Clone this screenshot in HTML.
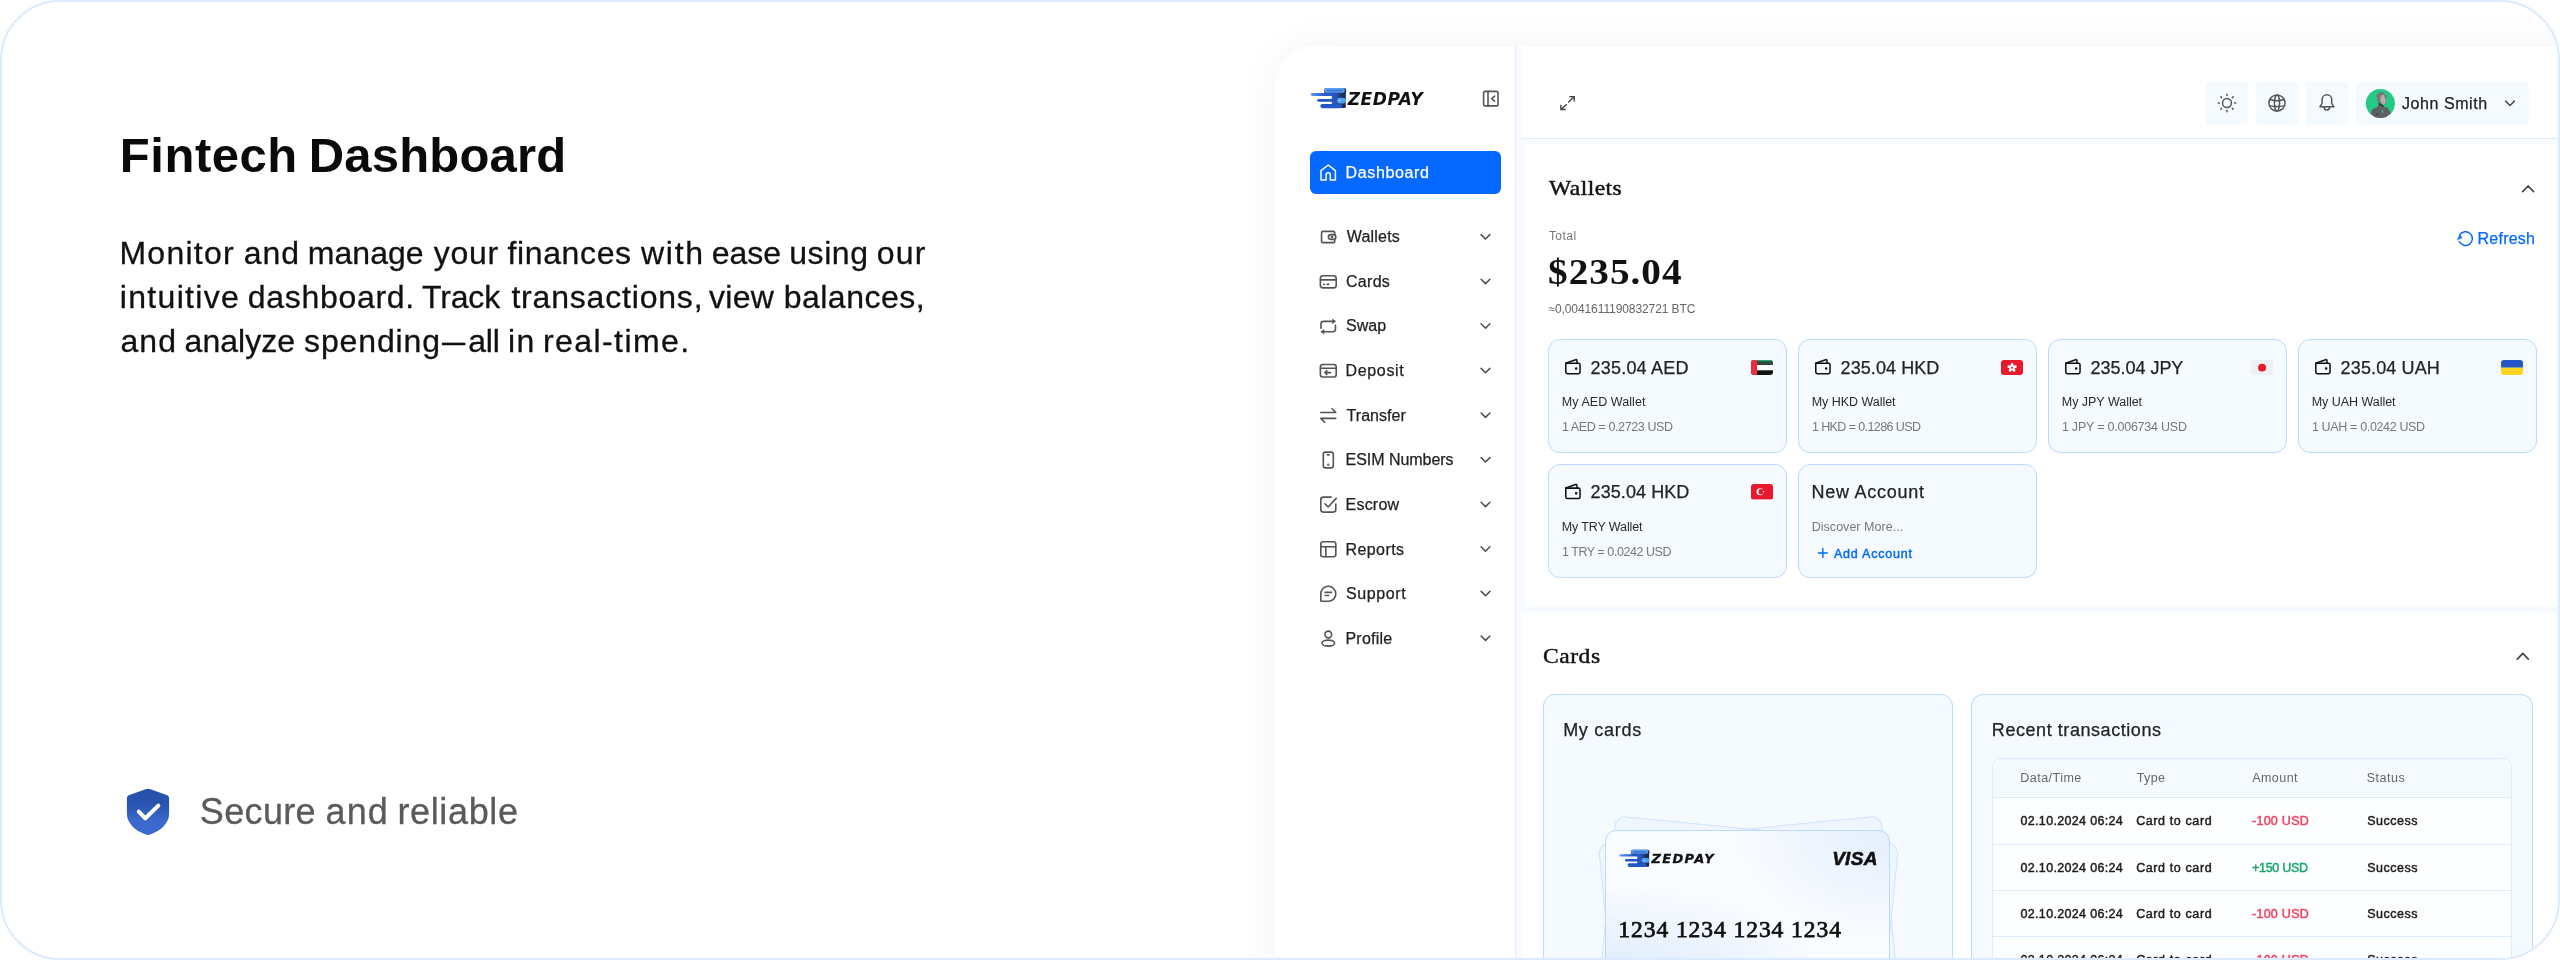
<!DOCTYPE html>
<html lang="en"><head><meta charset="utf-8"><title>Fintech Dashboard</title>
<style>
html,body{margin:0;padding:0;background:#fff;}
body{width:2560px;height:960px;overflow:hidden;position:relative;font-family:"Liberation Sans",sans-serif;}
#frame{position:absolute;left:0;top:0;width:2556px;height:956px;border:2px solid #dbeafe;border-radius:60px;background:#fff;overflow:hidden;}
#in{position:absolute;left:-2px;top:-2px;width:2560px;height:960px;will-change:transform;}
h1,h2,p{margin:0;padding:0;font:inherit;}
.t{position:absolute;white-space:pre;display:block;}
.b{position:absolute;box-sizing:border-box;}
svg{position:absolute;overflow:visible;}
.ic{fill:none;stroke:#555;stroke-width:1.5;stroke-linecap:round;stroke-linejoin:round;}
#dash{left:1274.5px;top:45.5px;width:1320px;height:960px;background:#fff;border-top-left-radius:40px;box-shadow:0 0 40px rgba(0,0,0,.05);overflow:hidden;}
#dashin{position:absolute;left:-1274.5px;top:-45.5px;width:2560px;height:960px;}
.main{left:1516px;top:45px;width:1060px;height:930px;background:#f7fbff;}
.sbline{left:1515px;top:45px;width:1px;height:930px;background:#e3effd;}
.hdr{left:1516px;top:45px;width:1060px;height:94px;background:#fff;border-bottom:1px solid #dcebfd;}
.panel{background:#fff;}
.nb{left:1310.2px;top:150.9px;width:191.3px;height:43px;border-radius:6px;background:#0569ff;}
.hb{height:42.8px;border-radius:4px;background:#f5faff;}
.wc{width:238.6px;height:114.4px;border-radius:12px;border:1px solid #bcd9ff;background:#f5faff;}
.box{border-radius:12px;border:1px solid #bcd9ff;background:#f5faff;}
.flag{width:21.8px;height:15.4px;border-radius:3px;overflow:hidden;}

</style></head>
<body>
<div id="frame"><div id="in">
<svg class="" style="left:126px;top:788px;" width="46" height="49" viewBox="0 0 46 49"><g transform="translate(0.900 0.750) scale(1.00000 1.00000) translate(-0.0 -0.0)"><defs><linearGradient id="sg" x1="0" y1="0" x2="0" y2="1"><stop offset="0" stop-color="#2652ac"/><stop offset="0.3" stop-color="#2753ae"/><stop offset="0.7" stop-color="#3a69cb"/><stop offset="1" stop-color="#3c6cd0"/></linearGradient></defs>
<path d="M21.1 0 C22 0 22.8 0.3 23.6 0.6 L39.7 6.3 C41.3 6.9 42.2 8 42.2 9.6 L42.2 25 C42.2 35 33 42.5 23.3 45.8 C21.9 46.4 20.3 46.4 18.9 45.8 C9.2 42.5 0 35 0 25 L0 9.6 C0 8 0.9 6.9 2.5 6.3 L18.6 0.6 C19.4 0.3 20.2 0 21.1 0 Z" fill="url(#sg)" stroke="none"/>
<path d="M11.9 22.9 L18.4 29.6 L31.4 16.9" fill="none" stroke="#fff" stroke-width="4.1" stroke-linecap="round" stroke-linejoin="round"/></g></svg>
<div class="b" id="dash"><div id="dashin">
<div class="b main" style="left:1516px;top:45px;"></div>
<div class="b hdr" style="left:1521px;top:45px;"></div>
<div class="b sbline" style="left:1515px;top:45px;"></div>
<div class="b panel" style="left:1526.4px;top:144.1px;width:1040px;height:462.1px;"></div>
<div class="b panel" style="left:1520.7px;top:611.9px;width:1034.3px;height:360px;"></div>
<svg class="" style="left:1310px;top:87px;" width="39" height="24" viewBox="0 0 39 24"><g transform="translate(0.500 0.500) scale(1.00000 1.00000) translate(-0.0 -0.0)">
<defs><linearGradient id="lg1a" x1="0" y1="0" x2="1" y2="0"><stop offset="0" stop-color="#2d62cf"/><stop offset="0.35" stop-color="#2450b0"/><stop offset="0.75" stop-color="#1d2d58"/><stop offset="1" stop-color="#1a2748"/></linearGradient>
<linearGradient id="lg1b" x1="0" y1="0" x2="1" y2="0"><stop offset="0" stop-color="#5a9df5"/><stop offset="0.5" stop-color="#2a5fcc"/><stop offset="1" stop-color="#2353c0"/></linearGradient></defs>
<rect x="13.7" y="0.5" width="22" height="6" rx="2.3" fill="#1f2e55"/>
<rect x="13.7" y="0.5" width="20.6" height="4.7" rx="2.3" fill="#5b9ff3"/>
<rect x="16" y="1.9" width="16.5" height="2" rx="1" fill="#3f78dc"/>
<path d="M21.2 5.4 H35.3 V19 A1.6 1.6 0 0 1 33.7 20.6 H21.2 Z" fill="url(#lg1a)"/>
<rect x="0.3" y="5.6" width="25" height="2.9" rx="1.45" fill="url(#lg1b)"/>
<rect x="6.8" y="11.4" width="17" height="2.8" rx="1.4" fill="#2457c6"/>
<rect x="9.8" y="16.4" width="22" height="4.3" rx="2.1" fill="#2457c6"/>
<rect x="26.4" y="10.2" width="9.2" height="5.7" rx="2.8" fill="#4e9cf7"/>
<circle cx="29.4" cy="13.1" r="0.75" fill="#e8f2ff"/>
</g></svg>
<svg class="ic" style="left:1482px;top:90px;stroke-width:1.6" width="20" height="20" viewBox="0 0 20 20"><g transform="translate(0.000 0.000) scale(1.00000 1.00000) translate(-1482.0 -90.0)"><rect x="1483.6" y="91.4" width="14.4" height="14.5" rx="1.7"/><path d="M1488 91.4 V105.9"/><path d="M1494.6 96.1 L1491.7 98.6 L1494.6 101.1"/></g></svg>
<div class="b nb" style="left:1310.2px;top:150.9px;"></div>
<svg class="ic" style="left:1319px;top:163px;stroke:#fff;stroke-width:1.5" width="21" height="21" viewBox="0 0 21 21"><g transform="translate(0.000 0.000) scale(1.00000 1.00000) translate(-1319.0 -163.0)"><path d="M1321 170.6 L1328.2 165 L1335.4 170.6 V180.1 H1330.3 V174.9 A2.1 2.1 0 0 0 1326.1 174.9 V180.1 H1321 Z"/></g></svg>
<svg class="ic" style="left:1318px;top:227px;stroke-width:1.95;" width="23" height="22" viewBox="0 0 23 22"><g transform="translate(0.300 0.000) scale(0.83333 0.83333) translate(-0.0 -0.0)"><rect x="3.9" y="5.2" width="15.8" height="13.6" rx="1.8"/><rect x="12.1" y="9.2" width="8.9" height="5.6" rx="2.8" fill="#fff"/><circle cx="16.4" cy="12" r="0.7"/></g></svg>
<svg class="ic" style="left:1480px;top:233px;stroke:#4d4d4d;stroke-width:1.5" width="13" height="10" viewBox="0 0 13 10"><g transform="translate(0.300 0.700) scale(1.00000 1.00000) translate(-0.0 -0.0)"><path d="M0.8 0.9 L5.2 5.3 L9.6 0.9"/></g></svg>
<svg class="ic" style="left:1318px;top:271px;stroke-width:1.95;" width="23" height="23" viewBox="0 0 23 23"><g transform="translate(0.300 0.600) scale(0.83333 0.83333) translate(-0.0 -0.0)"><rect x="2.5" y="5" width="19" height="14.5" rx="3.2"/><path d="M2.5 10 H21.5"/><path d="M6.5 15.3 H7.2 M10.5 15.3 H12.5"/></g></svg>
<svg class="ic" style="left:1480px;top:278px;stroke:#4d4d4d;stroke-width:1.5" width="13" height="9" viewBox="0 0 13 9"><g transform="translate(0.300 0.300) scale(1.00000 1.00000) translate(-0.0 -0.0)"><path d="M0.8 0.9 L5.2 5.3 L9.6 0.9"/></g></svg>
<svg class="ic" style="left:1318px;top:316px;stroke-width:1.95;" width="23" height="23" viewBox="0 0 23 23"><g transform="translate(0.300 0.200) scale(0.83333 0.83333) translate(-0.0 -0.0)"><path d="M3.2 14.4 V9.4 A3.2 3.2 0 0 1 6.4 6.2 H18.5"/><path d="M17.4 3.8 L20.8 6.2 L17.4 8.6 Z" fill="#555" stroke-width="0.8"/><path d="M20.6 10.8 V15.5 A3.2 3.2 0 0 1 17.4 18.7 H5.5"/><path d="M6.4 16.3 L3 18.7 L6.4 21.1 Z" fill="#555" stroke-width="0.8"/></g></svg>
<svg class="ic" style="left:1480px;top:322px;stroke:#4d4d4d;stroke-width:1.5" width="13" height="10" viewBox="0 0 13 10"><g transform="translate(0.300 0.900) scale(1.00000 1.00000) translate(-0.0 -0.0)"><path d="M0.8 0.9 L5.2 5.3 L9.6 0.9"/></g></svg>
<svg class="ic" style="left:1318px;top:360px;stroke-width:1.95;" width="23" height="23" viewBox="0 0 23 23"><g transform="translate(0.300 0.800) scale(0.83333 0.83333) translate(-0.0 -0.0)"><rect x="2.5" y="4.5" width="19" height="15" rx="3"/><path d="M2.5 9 H21.5"/><path d="M14.5 14.2 H8 M10.3 11.9 L8 14.2 L10.3 16.5"/></g></svg>
<svg class="ic" style="left:1480px;top:367px;stroke:#4d4d4d;stroke-width:1.5" width="13" height="10" viewBox="0 0 13 10"><g transform="translate(0.300 0.500) scale(1.00000 1.00000) translate(-0.0 -0.0)"><path d="M0.8 0.9 L5.2 5.3 L9.6 0.9"/></g></svg>
<svg class="ic" style="left:1318px;top:405px;stroke-width:1.95;" width="23" height="23" viewBox="0 0 23 23"><g transform="translate(0.300 0.400) scale(0.83333 0.83333) translate(-0.0 -0.0)"><path d="M3 8.5 H21 L16.5 4"/><path d="M21 15.5 H3 L7.5 20"/></g></svg>
<svg class="ic" style="left:1480px;top:412px;stroke:#4d4d4d;stroke-width:1.5" width="13" height="9" viewBox="0 0 13 9"><g transform="translate(0.300 0.100) scale(1.00000 1.00000) translate(-0.0 -0.0)"><path d="M0.8 0.9 L5.2 5.3 L9.6 0.9"/></g></svg>
<svg class="ic" style="left:1318px;top:450px;stroke-width:1.95;" width="23" height="22" viewBox="0 0 23 22"><g transform="translate(0.300 0.000) scale(0.83333 0.83333) translate(-0.0 -0.0)"><rect x="6" y="2.5" width="12" height="19" rx="2.6"/><path d="M11 5.8 H13"/><circle cx="12" cy="17.6" r="0.5"/></g></svg>
<svg class="ic" style="left:1480px;top:456px;stroke:#4d4d4d;stroke-width:1.5" width="13" height="10" viewBox="0 0 13 10"><g transform="translate(0.300 0.700) scale(1.00000 1.00000) translate(-0.0 -0.0)"><path d="M0.8 0.9 L5.2 5.3 L9.6 0.9"/></g></svg>
<svg class="ic" style="left:1318px;top:494px;stroke-width:1.95;" width="23" height="23" viewBox="0 0 23 23"><g transform="translate(0.300 0.600) scale(0.83333 0.83333) translate(-0.0 -0.0)"><path d="M21 11.5 V18 A3 3 0 0 1 18 21 H6 A3 3 0 0 1 3 18 V6 A3 3 0 0 1 6 3 H15.5"/><path d="M8 11 L11.8 14.8 L21.5 4.5"/></g></svg>
<svg class="ic" style="left:1480px;top:501px;stroke:#4d4d4d;stroke-width:1.5" width="13" height="9" viewBox="0 0 13 9"><g transform="translate(0.300 0.300) scale(1.00000 1.00000) translate(-0.0 -0.0)"><path d="M0.8 0.9 L5.2 5.3 L9.6 0.9"/></g></svg>
<svg class="ic" style="left:1318px;top:539px;stroke-width:1.95;" width="23" height="23" viewBox="0 0 23 23"><g transform="translate(0.300 0.200) scale(0.83333 0.83333) translate(-0.0 -0.0)"><rect x="3" y="3" width="18" height="18" rx="2.6"/><path d="M3 9 H21 M9 9 V21"/></g></svg>
<svg class="ic" style="left:1480px;top:545px;stroke:#4d4d4d;stroke-width:1.5" width="13" height="10" viewBox="0 0 13 10"><g transform="translate(0.300 0.900) scale(1.00000 1.00000) translate(-0.0 -0.0)"><path d="M0.8 0.9 L5.2 5.3 L9.6 0.9"/></g></svg>
<svg class="ic" style="left:1318px;top:583px;stroke-width:1.95;" width="23" height="23" viewBox="0 0 23 23"><g transform="translate(0.300 0.800) scale(0.83333 0.83333) translate(-0.0 -0.0)"><path d="M12 3 A9 9 0 0 1 12 21 H3.6 A0.6 0.6 0 0 1 3 20.4 V12 A9 9 0 0 1 12 3 Z"/><path d="M8.2 10.3 H15.8 M8.2 14 H12.5"/></g></svg>
<svg class="ic" style="left:1480px;top:590px;stroke:#4d4d4d;stroke-width:1.5" width="13" height="10" viewBox="0 0 13 10"><g transform="translate(0.300 0.500) scale(1.00000 1.00000) translate(-0.0 -0.0)"><path d="M0.8 0.9 L5.2 5.3 L9.6 0.9"/></g></svg>
<svg class="ic" style="left:1318px;top:628px;stroke-width:1.95;" width="23" height="23" viewBox="0 0 23 23"><g transform="translate(0.300 0.400) scale(0.83333 0.83333) translate(-0.0 -0.0)"><circle cx="12" cy="7.3" r="4"/><ellipse cx="12" cy="17.6" rx="7.6" ry="3.6"/></g></svg>
<svg class="ic" style="left:1480px;top:635px;stroke:#4d4d4d;stroke-width:1.5" width="13" height="9" viewBox="0 0 13 9"><g transform="translate(0.300 0.100) scale(1.00000 1.00000) translate(-0.0 -0.0)"><path d="M0.8 0.9 L5.2 5.3 L9.6 0.9"/></g></svg>
<svg class="ic" style="left:1559px;top:95px;stroke-width:1.4;stroke:#444;stroke-linecap:butt;stroke-linejoin:miter" width="19" height="18" viewBox="0 0 19 18"><g transform="translate(0.000 0.000) scale(1.00000 1.00000) translate(-1559.0 -95.0)"><path d="M1568.2 102.4 L1574.2 96.6 M1569.3 96.6 H1574.2 V101.6"/><path d="M1566.8 104.2 L1560.9 109.5 M1560.9 104.8 V109.5 H1565.8"/></g></svg>
<div class="b hb" style="left:2205.9px;top:81.9px;width:42.6px;"></div>
<div class="b hb" style="left:2255.9px;top:81.9px;width:42.7px;"></div>
<div class="b hb" style="left:2305.9px;top:81.9px;width:42.7px;"></div>
<div class="b hb" style="left:2355.9px;top:81.9px;width:173.4px;"></div>
<svg class="ic" style="left:2216px;top:92px;stroke-width:1.95;stroke-width:1.7;" width="24" height="24" viewBox="0 0 24 24"><g transform="translate(0.500 0.500) scale(0.87500 0.87500) translate(-0.0 -0.0)"><circle cx="12" cy="12" r="5.1"/><path d="M20.70 12.00 L22.00 12.00"/><path d="M18.15 18.15 L19.07 19.07"/><path d="M12.00 20.70 L12.00 22.00"/><path d="M5.85 18.15 L4.93 19.07"/><path d="M3.30 12.00 L2.00 12.00"/><path d="M5.85 5.85 L4.93 4.93"/><path d="M12.00 3.30 L12.00 2.00"/><path d="M18.15 5.85 L19.07 4.93"/></g></svg>
<svg class="ic" style="left:2266px;top:92px;stroke-width:1.95;stroke-width:1.7;" width="24" height="24" viewBox="0 0 24 24"><g transform="translate(0.500 0.500) scale(0.87500 0.87500) translate(-0.0 -0.0)"><circle cx="12" cy="12" r="9.2"/><ellipse cx="12" cy="12" rx="2.9" ry="9.2"/><path d="M3.9 7.7 Q12 11.1 20.1 7.7 M3.4 15 Q12 17 20.6 15"/></g></svg>
<svg class="ic" style="left:2316px;top:92px;stroke-width:1.95;stroke-width:1.7;" width="24" height="24" viewBox="0 0 24 24"><g transform="translate(0.400 0.400) scale(0.87500 0.87500) translate(-0.0 -0.0)"><path d="M6.5 8.3 A5.5 5.5 0 0 1 17.5 8.3 V12.6 L20 16.5 H4 L6.5 12.6 Z"/><path d="M9 16.9 A3 3.2 0 0 0 15 16.9"/></g></svg>
<svg class="" style="left:2365px;top:88px;" width="32" height="32" viewBox="0 0 32 32"><g transform="translate(0.900 0.900) scale(1.00000 1.00000) translate(-0.0 -0.0)"><defs><clipPath id="av"><circle cx="14.5" cy="14.5" r="14.5"/></clipPath></defs>
<circle cx="14.5" cy="14.5" r="14.5" fill="#24c984"/>
<g clip-path="url(#av)"><polygon points="4.73,24.52 6.60,20.35 11.60,17.85 12.85,14.52 15.77,16.60 18.06,18.06 21.60,18.68 24.10,22.85 25.14,24.31 19.10,29.5 14.10,29.5 9.10,29" fill="#5f5f61"/>
<polygon points="12.02,4.52 15.77,3.06 18.06,3.48 19.10,6.18 20.77,6.60 19.93,10.77 20.77,12.43 19.52,14.93 17.85,15.97 14.93,14.93 12.43,13.68 11.18,11.60 11.60,8.27 10.14,8.27 10.35,6.39" fill="#77777a"/>
<polygon points="14.93,6.60 17.85,5.77 19.52,10.77 20.14,12.43 19.10,14.72 17.64,15.56 15.77,14.52 14.52,11.60" fill="#b4b4b6"/>
<path d="M12.85 14.6 L17.85 17.5" stroke="#222" stroke-width="1.1" fill="none"/>
<rect x="15.95" y="20.9" width="1.3" height="3.2" fill="#24c984"/>
<circle cx="15.56" cy="8.6" r="0.6" fill="#ff6f8f"/><circle cx="17.64" cy="13.45" r="0.6" fill="#ff6f8f"/>
<path d="M10.5 25.6 l1.6 -0.9" stroke="#111" stroke-width="0.9" fill="none"/></g></g></svg>
<svg class="ic" style="left:2504px;top:100px;stroke:#4d4d4d;stroke-width:1.5" width="14" height="9" viewBox="0 0 14 9"><g transform="translate(0.800 0.200) scale(1.00000 1.00000) translate(-0.0 -0.0)"><path d="M0.8 0.9 L5.2 5.3 L9.6 0.9"/></g></svg>
<svg class="ic" style="left:2521px;top:184px;stroke:#444;stroke-width:1.7" width="16" height="11" viewBox="0 0 16 11"><g transform="translate(0.700 0.800) scale(1.00000 1.00000) translate(-0.0 -0.0)"><path d="M0.9 6.9 L6.4 1.2 L11.9 6.9"/></g></svg>
<svg class="ic" style="left:2516px;top:652px;stroke:#444;stroke-width:1.7" width="16" height="10" viewBox="0 0 16 10"><g transform="translate(0.400 0.200) scale(1.00000 1.00000) translate(-0.0 -0.0)"><path d="M0.9 6.9 L6.4 1.2 L11.9 6.9"/></g></svg>
<svg class="ic" style="left:2457px;top:230px;stroke:#0569ff;stroke-width:1.45" width="19" height="20" viewBox="0 0 19 20"><g transform="translate(0.000 0.100) scale(1.00000 1.00000) translate(8.5 8.5)"><path d="M-6.2 2.9 A6.85 6.85 0 1 0 -5.9 -3.5"/><path d="M-5.6 -3.6 L-3.5 -0.9 L-8.0 1.2 Z" fill="#0569ff" stroke-width="0.5"/></g></svg>
<div class="b wc" style="left:1548.3px;top:339px;"></div>
<svg class="ic" style="left:1564px;top:358px;stroke:#111;stroke-width:1.6" width="19" height="19" viewBox="0 0 19 19"><g transform="translate(0.800 0.700) scale(0.96429 1.00000) translate(-0.0 -0.0)"><path d="M1 4.6 H14.2 A1.6 1.6 0 0 1 15.8 6.2 V13.4 A1.6 1.6 0 0 1 14.2 15 H2.6 A1.6 1.6 0 0 1 1 13.4 Z"/><path d="M1 4.6 L11.2 1 A1 1 0 0 1 12.6 1.9 V4.6"/><circle cx="11.8" cy="9.8" r="0.55" fill="#111"/></g></svg>
<div class="b flag" style="left:1751.1px;top:359.6px"><svg width="22.2" height="15.4" viewBox="0 0 22.2 16" preserveAspectRatio="none" style="left:0;top:0"><rect width="22.2" height="5.4" fill="#2f4a3f"/><rect width="22.2" height="1.2" fill="#1fae6a"/><rect y="5.4" width="22.2" height="5.3" fill="#fff"/><rect y="10.7" width="22.2" height="5.3" fill="#111"/><rect width="6" height="16" fill="#ef2b3c"/></svg></div>
<div class="b wc" style="left:1798.3px;top:339px;"></div>
<svg class="ic" style="left:1814px;top:358px;stroke:#111;stroke-width:1.6" width="19" height="19" viewBox="0 0 19 19"><g transform="translate(0.800 0.700) scale(0.96429 1.00000) translate(-0.0 -0.0)"><path d="M1 4.6 H14.2 A1.6 1.6 0 0 1 15.8 6.2 V13.4 A1.6 1.6 0 0 1 14.2 15 H2.6 A1.6 1.6 0 0 1 1 13.4 Z"/><path d="M1 4.6 L11.2 1 A1 1 0 0 1 12.6 1.9 V4.6"/><circle cx="11.8" cy="9.8" r="0.55" fill="#111"/></g></svg>
<div class="b flag" style="left:2001.1px;top:359.6px"><svg width="22.2" height="15.4" viewBox="0 0 22.2 16" preserveAspectRatio="none" style="left:0;top:0"><rect width="22.2" height="16" fill="#e8192c"/><g fill="#fff" transform="translate(11.1 8)"><ellipse cx="0" cy="-2.6" rx="1.5" ry="2.3"/><ellipse cx="0" cy="-2.6" rx="1.5" ry="2.3" transform="rotate(72)"/><ellipse cx="0" cy="-2.6" rx="1.5" ry="2.3" transform="rotate(144)"/><ellipse cx="0" cy="-2.6" rx="1.5" ry="2.3" transform="rotate(216)"/><ellipse cx="0" cy="-2.6" rx="1.5" ry="2.3" transform="rotate(288)"/></g><circle cx="11.1" cy="8" r="1" fill="#e8192c"/></svg></div>
<div class="b wc" style="left:2048.3px;top:339px;"></div>
<svg class="ic" style="left:2064px;top:358px;stroke:#111;stroke-width:1.6" width="19" height="19" viewBox="0 0 19 19"><g transform="translate(0.800 0.700) scale(0.96429 1.00000) translate(-0.0 -0.0)"><path d="M1 4.6 H14.2 A1.6 1.6 0 0 1 15.8 6.2 V13.4 A1.6 1.6 0 0 1 14.2 15 H2.6 A1.6 1.6 0 0 1 1 13.4 Z"/><path d="M1 4.6 L11.2 1 A1 1 0 0 1 12.6 1.9 V4.6"/><circle cx="11.8" cy="9.8" r="0.55" fill="#111"/></g></svg>
<div class="b flag" style="left:2251.1000000000004px;top:359.6px"><svg width="22.2" height="15.4" viewBox="0 0 22.2 16" preserveAspectRatio="none" style="left:0;top:0"><rect width="22.2" height="16" fill="#eef1f4"/><circle cx="11.1" cy="8" r="4" fill="#e8192c"/></svg></div>
<div class="b wc" style="left:2298.3px;top:339px;"></div>
<svg class="ic" style="left:2314px;top:358px;stroke:#111;stroke-width:1.6" width="19" height="19" viewBox="0 0 19 19"><g transform="translate(0.800 0.700) scale(0.96429 1.00000) translate(-0.0 -0.0)"><path d="M1 4.6 H14.2 A1.6 1.6 0 0 1 15.8 6.2 V13.4 A1.6 1.6 0 0 1 14.2 15 H2.6 A1.6 1.6 0 0 1 1 13.4 Z"/><path d="M1 4.6 L11.2 1 A1 1 0 0 1 12.6 1.9 V4.6"/><circle cx="11.8" cy="9.8" r="0.55" fill="#111"/></g></svg>
<div class="b flag" style="left:2501.1000000000004px;top:359.6px"><svg width="22.2" height="15.4" viewBox="0 0 22.2 16" preserveAspectRatio="none" style="left:0;top:0"><rect width="22.2" height="8" fill="#2457c5"/><rect y="8" width="22.2" height="8" fill="#ffd41f"/></svg></div>
<div class="b wc" style="left:1548.3px;top:463.8px;"></div>
<svg class="ic" style="left:1564px;top:483px;stroke:#111;stroke-width:1.6" width="19" height="19" viewBox="0 0 19 19"><g transform="translate(0.800 0.500) scale(0.96429 1.00000) translate(-0.0 -0.0)"><path d="M1 4.6 H14.2 A1.6 1.6 0 0 1 15.8 6.2 V13.4 A1.6 1.6 0 0 1 14.2 15 H2.6 A1.6 1.6 0 0 1 1 13.4 Z"/><path d="M1 4.6 L11.2 1 A1 1 0 0 1 12.6 1.9 V4.6"/><circle cx="11.8" cy="9.8" r="0.55" fill="#111"/></g></svg>
<div class="b flag" style="left:1751.1px;top:484.40000000000003px"><svg width="22.2" height="15.4" viewBox="0 0 22.2 16" preserveAspectRatio="none" style="left:0;top:0"><rect width="22.2" height="16" fill="#e8192c"/><circle cx="9.2" cy="8" r="3.7" fill="#fff"/><circle cx="10.3" cy="8" r="2.9" fill="#e8192c"/><path d="M13.9 8 l-2.3 0.8 1.45 -1.95 v2.3 l-1.45 -1.95 z" fill="#fff"/></svg></div>
<div class="b wc" style="left:1798.3px;top:463.8px;"></div>
<svg class="ic" style="left:1817px;top:547px;stroke:#0569ff;stroke-width:1.4" width="14" height="14" viewBox="0 0 14 14"><g transform="translate(0.650 0.800) scale(1.00000 1.00000) translate(-0.0 -0.0)"><path d="M5.2 0.7 V9.7 M0.7 5.2 H9.7"/></g></svg>
<div class="b box" style="left:1542.5px;top:694px;width:410.5px;height:300px;"></div>
<div class="b box" style="left:1971px;top:694px;width:561.6px;height:300px;"></div>
<div class="b " style="left:1992.4px;top:758.0px;width:519.5px;height:240px;border:1px solid #dcebfd;border-radius:9px;background:#fdfeff;overflow:hidden;"><div class="b" style="left:0;top:0;width:100%;height:38.4px;background:#f5faff"></div><div class="b" style="left:0;top:38.4px;width:100%;height:1px;background:#dcebfd"></div><div class="b" style="left:0;top:84.6px;width:100%;height:1px;background:#dcebfd"></div><div class="b" style="left:0;top:130.8px;width:100%;height:1px;background:#dcebfd"></div><div class="b" style="left:0;top:177.2px;width:100%;height:1px;background:#dcebfd"></div></div>
<div class="b " style="left:1605.5px;top:828.8px;width:285px;height:180px;border:1px solid #cfe2ff;border-radius:11px;background:rgba(236,244,255,.75);transform:rotate(-5.7deg);transform-origin:50% 50%;"></div>
<div class="b " style="left:1605.5px;top:828.8px;width:285px;height:180px;border:1px solid #cfe2ff;border-radius:11px;background:rgba(236,244,255,.75);transform:rotate(5.7deg);transform-origin:50% 50%;"></div>
<div class="b " style="left:1604.9px;top:830.2px;width:285.5px;height:180px;border:1px solid #bcd9ff;border-radius:11px;background:radial-gradient(ellipse 85% 70% at 0% 100%,#d3e4fa 0%,rgba(211,228,250,0) 100%),radial-gradient(ellipse 55% 60% at 100% 0%,#e3eefc 0%,rgba(227,238,252,0) 100%),#f9fcff;"></div>
<svg class="" style="left:1619px;top:849px;" width="33" height="21" viewBox="0 0 33 21"><g transform="translate(0.300 0.400) scale(0.84500 0.84500) translate(-0.0 -0.0)">
<defs><linearGradient id="lg2a" x1="0" y1="0" x2="1" y2="0"><stop offset="0" stop-color="#2d62cf"/><stop offset="0.35" stop-color="#2450b0"/><stop offset="0.75" stop-color="#1d2d58"/><stop offset="1" stop-color="#1a2748"/></linearGradient>
<linearGradient id="lg2b" x1="0" y1="0" x2="1" y2="0"><stop offset="0" stop-color="#5a9df5"/><stop offset="0.5" stop-color="#2a5fcc"/><stop offset="1" stop-color="#2353c0"/></linearGradient></defs>
<rect x="13.7" y="0.5" width="22" height="6" rx="2.3" fill="#1f2e55"/>
<rect x="13.7" y="0.5" width="20.6" height="4.7" rx="2.3" fill="#5b9ff3"/>
<rect x="16" y="1.9" width="16.5" height="2" rx="1" fill="#3f78dc"/>
<path d="M21.2 5.4 H35.3 V19 A1.6 1.6 0 0 1 33.7 20.6 H21.2 Z" fill="url(#lg2a)"/>
<rect x="0.3" y="5.6" width="25" height="2.9" rx="1.45" fill="url(#lg2b)"/>
<rect x="6.8" y="11.4" width="17" height="2.8" rx="1.4" fill="#2457c6"/>
<rect x="9.8" y="16.4" width="22" height="4.3" rx="2.1" fill="#2457c6"/>
<rect x="26.4" y="10.2" width="9.2" height="5.7" rx="2.8" fill="#4e9cf7"/>
<circle cx="29.4" cy="13.1" r="0.75" fill="#e8f2ff"/>
</g></svg>
</div></div>
<h1>
<span class="t" style="left:119.87px;top:131.01px;font:700 49px/49px 'Liberation Sans', sans-serif;letter-spacing:0.517px;color:#0a0a0a;">Fintech</span>
<span class="t" style="left:308.73px;top:131.01px;font:700 49px/49px 'Liberation Sans', sans-serif;letter-spacing:0.186px;color:#0a0a0a;">Dashboard</span>
</h1>
<p>
<span class="t" style="left:119.45px;top:237.00px;font:400 32px/32px 'Liberation Sans', sans-serif;letter-spacing:1.244px;color:#111;-webkit-text-stroke:0.3px #111;">Monitor</span>
<span class="t" style="left:243.75px;top:237.00px;font:400 32px/32px 'Liberation Sans', sans-serif;letter-spacing:0.920px;color:#111;-webkit-text-stroke:0.3px #111;">and</span>
<span class="t" style="left:307.84px;top:237.00px;font:400 32px/32px 'Liberation Sans', sans-serif;letter-spacing:0.033px;color:#111;-webkit-text-stroke:0.3px #111;">manage</span>
<span class="t" style="left:433.85px;top:237.00px;font:400 32px/32px 'Liberation Sans', sans-serif;letter-spacing:0.692px;color:#111;-webkit-text-stroke:0.3px #111;">your</span>
<span class="t" style="left:507.55px;top:237.00px;font:400 32px/32px 'Liberation Sans', sans-serif;letter-spacing:0.620px;color:#111;-webkit-text-stroke:0.3px #111;">finances</span>
<span class="t" style="left:641.01px;top:237.00px;font:400 32px/32px 'Liberation Sans', sans-serif;letter-spacing:1.727px;color:#111;-webkit-text-stroke:0.3px #111;">with</span>
<span class="t" style="left:711.78px;top:237.00px;font:400 32px/32px 'Liberation Sans', sans-serif;letter-spacing:-0.025px;color:#111;-webkit-text-stroke:0.3px #111;">ease</span>
<span class="t" style="left:789.27px;top:237.00px;font:400 32px/32px 'Liberation Sans', sans-serif;letter-spacing:0.560px;color:#111;-webkit-text-stroke:0.3px #111;">using</span>
<span class="t" style="left:876.81px;top:237.00px;font:400 32px/32px 'Liberation Sans', sans-serif;letter-spacing:1.173px;color:#111;-webkit-text-stroke:0.3px #111;">our</span>
<span class="t" style="left:119.82px;top:281.00px;font:400 32px/32px 'Liberation Sans', sans-serif;letter-spacing:1.313px;color:#111;-webkit-text-stroke:0.3px #111;">intuitive</span>
<span class="t" style="left:247.84px;top:281.00px;font:400 32px/32px 'Liberation Sans', sans-serif;letter-spacing:0.696px;color:#111;-webkit-text-stroke:0.3px #111;">dashboard.</span>
<span class="t" style="left:421.99px;top:281.00px;font:400 32px/32px 'Liberation Sans', sans-serif;letter-spacing:-0.151px;color:#111;-webkit-text-stroke:0.3px #111;">Track</span>
<span class="t" style="left:511.41px;top:281.00px;font:400 32px/32px 'Liberation Sans', sans-serif;letter-spacing:0.811px;color:#111;-webkit-text-stroke:0.3px #111;">transactions,</span>
<span class="t" style="left:709.10px;top:281.00px;font:400 32px/32px 'Liberation Sans', sans-serif;letter-spacing:0.265px;color:#111;-webkit-text-stroke:0.3px #111;">view</span>
<span class="t" style="left:783.65px;top:281.00px;font:400 32px/32px 'Liberation Sans', sans-serif;letter-spacing:0.506px;color:#111;-webkit-text-stroke:0.3px #111;">balances,</span>
<span class="t" style="left:120.39px;top:325.00px;font:400 32px/32px 'Liberation Sans', sans-serif;letter-spacing:1.115px;color:#111;-webkit-text-stroke:0.3px #111;">and</span>
<span class="t" style="left:184.55px;top:325.00px;font:400 32px/32px 'Liberation Sans', sans-serif;letter-spacing:0.037px;color:#111;-webkit-text-stroke:0.3px #111;">analyze</span>
<span class="t" style="left:304.10px;top:325.00px;font:400 32px/32px 'Liberation Sans', sans-serif;letter-spacing:0.854px;color:#111;-webkit-text-stroke:0.3px #111;">spending</span>
<span class="t" style="left:442.26px;top:325.00px;font:400 32px/32px 'Liberation Sans', sans-serif;letter-spacing:0.000px;transform:scaleX(0.7257);transform-origin:0 0;color:#111;-webkit-text-stroke:0.3px #111;">—</span>
<span class="t" style="left:468.32px;top:325.00px;font:400 32px/32px 'Liberation Sans', sans-serif;letter-spacing:-0.250px;color:#111;-webkit-text-stroke:0.3px #111;">all</span>
<span class="t" style="left:507.99px;top:325.00px;font:400 32px/32px 'Liberation Sans', sans-serif;letter-spacing:1.410px;color:#111;-webkit-text-stroke:0.3px #111;">in</span>
<span class="t" style="left:542.98px;top:325.00px;font:400 32px/32px 'Liberation Sans', sans-serif;letter-spacing:1.420px;color:#111;-webkit-text-stroke:0.3px #111;">real-time.</span>
</p>
<h2>
<span class="t" style="left:199.85px;top:794.01px;font:400 36px/36px 'Liberation Sans', sans-serif;letter-spacing:0.341px;color:#5a5a5a;-webkit-text-stroke:0.3px #5a5a5a;">Secure</span>
<span class="t" style="left:325.53px;top:794.01px;font:400 36px/36px 'Liberation Sans', sans-serif;letter-spacing:1.119px;color:#5a5a5a;-webkit-text-stroke:0.3px #5a5a5a;">and</span>
<span class="t" style="left:397.39px;top:794.01px;font:400 36px/36px 'Liberation Sans', sans-serif;letter-spacing:0.651px;color:#5a5a5a;-webkit-text-stroke:0.3px #5a5a5a;">reliable</span>
</h2>
<span class="t" style="left:1347.72px;top:91.00px;font:italic 700 17px/17px 'DejaVu Sans', 'Liberation Sans', sans-serif;letter-spacing:0.538px;color:#111;">ZEDPAY</span>
<span class="t" style="left:1345.62px;top:165.01px;font:400 16px/16px 'Liberation Sans', sans-serif;letter-spacing:0.629px;color:#fff;-webkit-text-stroke:0.25px #fff;">Dashboard</span>
<span class="t" style="left:1346.73px;top:229.01px;font:400 16px/16px 'Liberation Sans', sans-serif;letter-spacing:0.213px;color:#222;-webkit-text-stroke:0.25px #222;">Wallets</span>
<span class="t" style="left:1346.04px;top:274.01px;font:400 16px/16px 'Liberation Sans', sans-serif;letter-spacing:0.287px;color:#222;-webkit-text-stroke:0.25px #222;">Cards</span>
<span class="t" style="left:1346.00px;top:318.00px;font:400 16px/16px 'Liberation Sans', sans-serif;letter-spacing:0.073px;color:#222;-webkit-text-stroke:0.25px #222;">Swap</span>
<span class="t" style="left:1345.52px;top:363.01px;font:400 16px/16px 'Liberation Sans', sans-serif;letter-spacing:0.665px;color:#222;-webkit-text-stroke:0.25px #222;">Deposit</span>
<span class="t" style="left:1346.58px;top:408.01px;font:400 16px/16px 'Liberation Sans', sans-serif;letter-spacing:0.041px;color:#222;-webkit-text-stroke:0.25px #222;">Transfer</span>
<span class="t" style="left:1345.52px;top:452.00px;font:400 16px/16px 'Liberation Sans', sans-serif;letter-spacing:-0.040px;color:#222;-webkit-text-stroke:0.25px #222;">ESIM Numbers</span>
<span class="t" style="left:1345.62px;top:497.01px;font:400 16px/16px 'Liberation Sans', sans-serif;letter-spacing:0.196px;color:#222;-webkit-text-stroke:0.25px #222;">Escrow</span>
<span class="t" style="left:1345.41px;top:542.01px;font:400 16px/16px 'Liberation Sans', sans-serif;letter-spacing:0.438px;color:#222;-webkit-text-stroke:0.25px #222;">Reports</span>
<span class="t" style="left:1345.96px;top:586.00px;font:400 16px/16px 'Liberation Sans', sans-serif;letter-spacing:0.631px;color:#222;-webkit-text-stroke:0.25px #222;">Support</span>
<span class="t" style="left:1345.41px;top:631.01px;font:400 16px/16px 'Liberation Sans', sans-serif;letter-spacing:0.239px;color:#222;-webkit-text-stroke:0.25px #222;">Profile</span>
<span class="t" style="left:2401.88px;top:96.01px;font:400 16px/16px 'Liberation Sans', sans-serif;letter-spacing:0.580px;color:#222;-webkit-text-stroke:0.25px #222;">John Smith</span>
<span class="t" style="left:1548.91px;top:177.00px;font:400 22px/22px 'Liberation Serif', serif;letter-spacing:0.414px;transform:scaleX(1.0700);transform-origin:0 0;color:#111;-webkit-text-stroke:0.45px #111;">Wallets</span>
<span class="t" style="left:1548.88px;top:230.01px;font:400 12px/12px 'Liberation Sans', sans-serif;letter-spacing:0.475px;color:#777;">Total</span>
<span class="t" style="left:1547.69px;top:254.00px;font:700 36px/36px 'Liberation Serif', serif;letter-spacing:0.924px;transform:scaleX(1.0900);transform-origin:0 0;color:#111;">$235.04</span>
<span class="t" style="left:1548.42px;top:303.00px;font:400 12px/12px 'Liberation Sans', sans-serif;letter-spacing:-0.086px;color:#666;">≈0,0041611190832721 BTC</span>
<span class="t" style="left:2477.55px;top:231.00px;font:400 16px/16px 'Liberation Sans', sans-serif;letter-spacing:0.232px;color:#0569ff;-webkit-text-stroke:0.25px #0569ff;">Refresh</span>
<span class="t" style="left:1590.54px;top:359.01px;font:400 18px/18px 'Liberation Sans', sans-serif;letter-spacing:0.208px;color:#222;-webkit-text-stroke:0.25px #222;">235.04 AED</span>
<span class="t" style="left:1561.73px;top:396.01px;font:400 12.5px/12.5px 'Liberation Sans', sans-serif;letter-spacing:0.072px;color:#2a2a2a;">My AED Wallet</span>
<span class="t" style="left:1561.90px;top:421.01px;font:400 12.5px/12.5px 'Liberation Sans', sans-serif;letter-spacing:-0.393px;color:#777;">1 AED = 0.2723 USD</span>
<span class="t" style="left:1840.54px;top:359.01px;font:400 18px/18px 'Liberation Sans', sans-serif;letter-spacing:0.086px;color:#222;-webkit-text-stroke:0.25px #222;">235.04 HKD</span>
<span class="t" style="left:1811.72px;top:396.01px;font:400 12.5px/12.5px 'Liberation Sans', sans-serif;letter-spacing:-0.037px;color:#2a2a2a;">My HKD Wallet</span>
<span class="t" style="left:1811.90px;top:421.01px;font:400 12.5px/12.5px 'Liberation Sans', sans-serif;letter-spacing:-0.587px;color:#777;">1 HKD = 0.1286 USD</span>
<span class="t" style="left:2090.54px;top:359.01px;font:400 18px/18px 'Liberation Sans', sans-serif;letter-spacing:-0.026px;color:#222;-webkit-text-stroke:0.25px #222;">235.04 JPY</span>
<span class="t" style="left:2061.74px;top:396.01px;font:400 12.5px/12.5px 'Liberation Sans', sans-serif;letter-spacing:-0.018px;color:#2a2a2a;">My JPY Wallet</span>
<span class="t" style="left:2061.90px;top:421.01px;font:400 12.5px/12.5px 'Liberation Sans', sans-serif;letter-spacing:-0.226px;color:#777;">1 JPY = 0.006734 USD</span>
<span class="t" style="left:2340.60px;top:359.01px;font:400 18px/18px 'Liberation Sans', sans-serif;letter-spacing:0.135px;color:#222;-webkit-text-stroke:0.25px #222;">235.04 UAH</span>
<span class="t" style="left:2311.72px;top:396.01px;font:400 12.5px/12.5px 'Liberation Sans', sans-serif;letter-spacing:-0.037px;color:#2a2a2a;">My UAH Wallet</span>
<span class="t" style="left:2311.90px;top:421.01px;font:400 12.5px/12.5px 'Liberation Sans', sans-serif;letter-spacing:-0.350px;color:#777;">1 UAH = 0.0242 USD</span>
<span class="t" style="left:1590.54px;top:483.00px;font:400 18px/18px 'Liberation Sans', sans-serif;letter-spacing:0.086px;color:#222;-webkit-text-stroke:0.25px #222;">235.04 HKD</span>
<span class="t" style="left:1561.72px;top:521.00px;font:400 12.5px/12.5px 'Liberation Sans', sans-serif;letter-spacing:-0.112px;color:#2a2a2a;">My TRY Wallet</span>
<span class="t" style="left:1561.90px;top:546.00px;font:400 12.5px/12.5px 'Liberation Sans', sans-serif;letter-spacing:-0.440px;color:#777;">1 TRY = 0.0242 USD</span>
<span class="t" style="left:1811.44px;top:483.00px;font:400 18px/18px 'Liberation Sans', sans-serif;letter-spacing:0.743px;color:#222;-webkit-text-stroke:0.25px #222;">New Account</span>
<span class="t" style="left:1811.72px;top:521.00px;font:400 12.5px/12.5px 'Liberation Sans', sans-serif;letter-spacing:0.028px;color:#777;">Discover More...</span>
<span class="t" style="left:1833.92px;top:548.01px;font:400 12.5px/12.5px 'Liberation Sans', sans-serif;letter-spacing:0.782px;color:#0569ff;-webkit-text-stroke:0.45px #0569ff;">Add Account</span>
<span class="t" style="left:1542.70px;top:645.01px;font:400 22px/22px 'Liberation Serif', serif;letter-spacing:0.506px;transform:scaleX(1.0700);transform-origin:0 0;color:#111;-webkit-text-stroke:0.45px #111;">Cards</span>
<span class="t" style="left:1563.14px;top:721.00px;font:400 18px/18px 'Liberation Sans', sans-serif;letter-spacing:0.725px;color:#222;-webkit-text-stroke:0.25px #222;">My cards</span>
<span class="t" style="left:1991.83px;top:721.00px;font:400 18px/18px 'Liberation Sans', sans-serif;letter-spacing:0.560px;color:#222;-webkit-text-stroke:0.25px #222;">Recent transactions</span>
<span class="t" style="left:2020.32px;top:772.01px;font:400 12.5px/12.5px 'Liberation Sans', sans-serif;letter-spacing:0.472px;color:#666;">Data/Time</span>
<span class="t" style="left:2136.73px;top:772.01px;font:400 12.5px/12.5px 'Liberation Sans', sans-serif;letter-spacing:0.365px;color:#666;">Type</span>
<span class="t" style="left:2252.17px;top:772.01px;font:400 12.5px/12.5px 'Liberation Sans', sans-serif;letter-spacing:0.468px;color:#666;">Amount</span>
<span class="t" style="left:2366.75px;top:772.01px;font:400 12.5px/12.5px 'Liberation Sans', sans-serif;letter-spacing:0.529px;color:#666;">Status</span>
<span class="t" style="left:2020.49px;top:815.00px;font:400 12.5px/12.5px 'Liberation Sans', sans-serif;letter-spacing:0.333px;color:#1c1c1c;-webkit-text-stroke:0.45px #1c1c1c;">02.10.2024 06:24</span>
<span class="t" style="left:2136.14px;top:815.00px;font:400 12.5px/12.5px 'Liberation Sans', sans-serif;letter-spacing:0.609px;color:#1c1c1c;-webkit-text-stroke:0.45px #1c1c1c;">Card to card</span>
<span class="t" style="left:2251.96px;top:815.00px;font:400 12.5px/12.5px 'Liberation Sans', sans-serif;letter-spacing:0.280px;color:#f43f5e;-webkit-text-stroke:0.45px #f43f5e;">-100 USD</span>
<span class="t" style="left:2367.24px;top:815.00px;font:400 12.5px/12.5px 'Liberation Sans', sans-serif;letter-spacing:0.510px;color:#1c1c1c;-webkit-text-stroke:0.45px #1c1c1c;">Success</span>
<span class="t" style="left:2020.49px;top:862.01px;font:400 12.5px/12.5px 'Liberation Sans', sans-serif;letter-spacing:0.333px;color:#1c1c1c;-webkit-text-stroke:0.45px #1c1c1c;">02.10.2024 06:24</span>
<span class="t" style="left:2136.14px;top:862.01px;font:400 12.5px/12.5px 'Liberation Sans', sans-serif;letter-spacing:0.609px;color:#1c1c1c;-webkit-text-stroke:0.45px #1c1c1c;">Card to card</span>
<span class="t" style="left:2251.95px;top:862.01px;font:400 12.5px/12.5px 'Liberation Sans', sans-serif;letter-spacing:-0.278px;color:#17a66b;-webkit-text-stroke:0.45px #17a66b;">+150 USD</span>
<span class="t" style="left:2367.24px;top:862.01px;font:400 12.5px/12.5px 'Liberation Sans', sans-serif;letter-spacing:0.510px;color:#1c1c1c;-webkit-text-stroke:0.45px #1c1c1c;">Success</span>
<span class="t" style="left:2020.49px;top:908.01px;font:400 12.5px/12.5px 'Liberation Sans', sans-serif;letter-spacing:0.333px;color:#1c1c1c;-webkit-text-stroke:0.45px #1c1c1c;">02.10.2024 06:24</span>
<span class="t" style="left:2136.14px;top:908.01px;font:400 12.5px/12.5px 'Liberation Sans', sans-serif;letter-spacing:0.609px;color:#1c1c1c;-webkit-text-stroke:0.45px #1c1c1c;">Card to card</span>
<span class="t" style="left:2251.96px;top:908.01px;font:400 12.5px/12.5px 'Liberation Sans', sans-serif;letter-spacing:0.280px;color:#f43f5e;-webkit-text-stroke:0.45px #f43f5e;">-100 USD</span>
<span class="t" style="left:2367.24px;top:908.01px;font:400 12.5px/12.5px 'Liberation Sans', sans-serif;letter-spacing:0.510px;color:#1c1c1c;-webkit-text-stroke:0.45px #1c1c1c;">Success</span>
<span class="t" style="left:2020.49px;top:954.01px;font:400 12.5px/12.5px 'Liberation Sans', sans-serif;letter-spacing:0.333px;color:#1c1c1c;-webkit-text-stroke:0.45px #1c1c1c;">02.10.2024 06:24</span>
<span class="t" style="left:2136.14px;top:954.01px;font:400 12.5px/12.5px 'Liberation Sans', sans-serif;letter-spacing:0.609px;color:#1c1c1c;-webkit-text-stroke:0.45px #1c1c1c;">Card to card</span>
<span class="t" style="left:2251.96px;top:954.01px;font:400 12.5px/12.5px 'Liberation Sans', sans-serif;letter-spacing:0.280px;color:#f43f5e;-webkit-text-stroke:0.45px #f43f5e;">-100 USD</span>
<span class="t" style="left:2367.24px;top:954.01px;font:400 12.5px/12.5px 'Liberation Sans', sans-serif;letter-spacing:0.510px;color:#1c1c1c;-webkit-text-stroke:0.45px #1c1c1c;">Success</span>
<span class="t" style="left:1651.52px;top:852.01px;font:italic 700 13px/13px 'DejaVu Sans', 'Liberation Sans', sans-serif;letter-spacing:1.329px;color:#111;-webkit-text-stroke:0.3px #111;">ZEDPAY</span>
<span class="t" style="left:1832.16px;top:849.00px;font:italic 700 19px/19px 'Liberation Sans', sans-serif;letter-spacing:0.288px;color:#111;-webkit-text-stroke:0.6px #111;">VISA</span>
<span class="t" style="left:1618.35px;top:918.01px;font:400 23.5px/23.5px 'Liberation Serif', serif;letter-spacing:0.942px;color:#111;-webkit-text-stroke:0.75px #111;">1234 1234 1234 1234</span>
</div></div>
</body></html>
